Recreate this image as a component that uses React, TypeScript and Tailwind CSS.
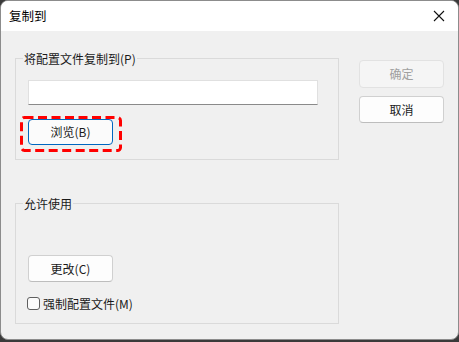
import React from "react";

const font = { fontFamily: '"Microsoft YaHei UI", "Noto Sans CJK SC", "Noto Sans", sans-serif' };

function Btn({ label, disabled, focused }: { label: string; disabled?: boolean; focused?: boolean }) {
  return (
    <div
      className={
        "w-[85px] flex items-center justify-center rounded-[4px] border text-[12px] " +
        (disabled
          ? "h-[28px] bg-[#f5f5f5] border-[#e2e2e2] text-[#a0a0a0]"
          : focused
            ? "h-[26px] bg-[#fbfbfb] border-[#0067c0] text-[#1a1a1a]"
            : "h-[27px] bg-[#fdfdfd] border-[#d0d0d0] border-b-[#bdbdbd] text-[#1a1a1a]")
      }
    >
      {label}
    </div>
  );
}

function Group({ title, className, children }: { title: string; className?: string; children: React.ReactNode }) {
  return (
    <div className={"relative w-[324px] border border-[#dadada] " + (className ?? "")}>
      <span className="absolute -top-[8px] left-[7px] bg-[#f0f0f0] px-[1px] leading-[15px] text-[12px] text-[#1a1a1a]">
        {title}
      </span>
      {children}
    </div>
  );
}

export default function App() {
  return (
    <div className="w-[459px] h-[342px] bg-[#3a3a3a] overflow-hidden" style={font}>
      <div className="w-[459px] h-[340px] bg-[#f0f0f0] border border-[#8c8c8c] rounded-[8px] overflow-hidden flex flex-col">
        {/* title bar */}
        <div className="h-[30px] bg-white flex items-center justify-between pl-[8px] pr-[9px] shrink-0">
          <span className="text-[12.5px] text-black">复制到</span>
          <svg width="12" height="12" viewBox="0 0 12 12" className="mr-[4px]">
            <path d="M1 1 L11 11 M11 1 L1 11" stroke="#111" strokeWidth="1.1" />
          </svg>
        </div>

        <div className="flex pl-[14px] pt-[27px]">
          <div className="flex flex-col">
            <Group title="将配置文件复制到(P)" className="h-[102px] pl-[12px] pt-[21px]">
              <div className="w-[290px] h-[25px] bg-white border border-[#e0e0e0] border-b-[#8a8a8a]" />
              <div className="relative mt-[14px] w-[85px]">
                <Btn label="浏览(B)" focused />
                <svg className="absolute -left-[8px] -top-[3px]" width="102" height="36" viewBox="0 0 102 36">
                  <rect x="1.5" y="1.5" width="99" height="33" rx="3" fill="none" stroke="#ff0000" strokeWidth="3" strokeDasharray="9 4.5" />
                </svg>
              </div>
            </Group>

            <Group title="允许使用" className="mt-[43px] h-[121px] pl-[12px] pt-[51px]">
              <Btn label="更改(C)" />
              <div className="mt-[14px] -ml-[1px] flex items-center gap-[3px]">
                <div className="w-[13px] h-[13px] rounded-[3px] border border-[#5f5f5f] bg-[#fbfbfb]" />
                <span className="text-[12px] text-[#1a1a1a] leading-[15px]">强制配置文件(M)</span>
              </div>
            </Group>
          </div>

          <div className="flex flex-col gap-[8px] ml-[20px] mt-[2px]">
            <Btn label="确定" disabled />
            <Btn label="取消" />
          </div>
        </div>
      </div>
    </div>
  );
}
